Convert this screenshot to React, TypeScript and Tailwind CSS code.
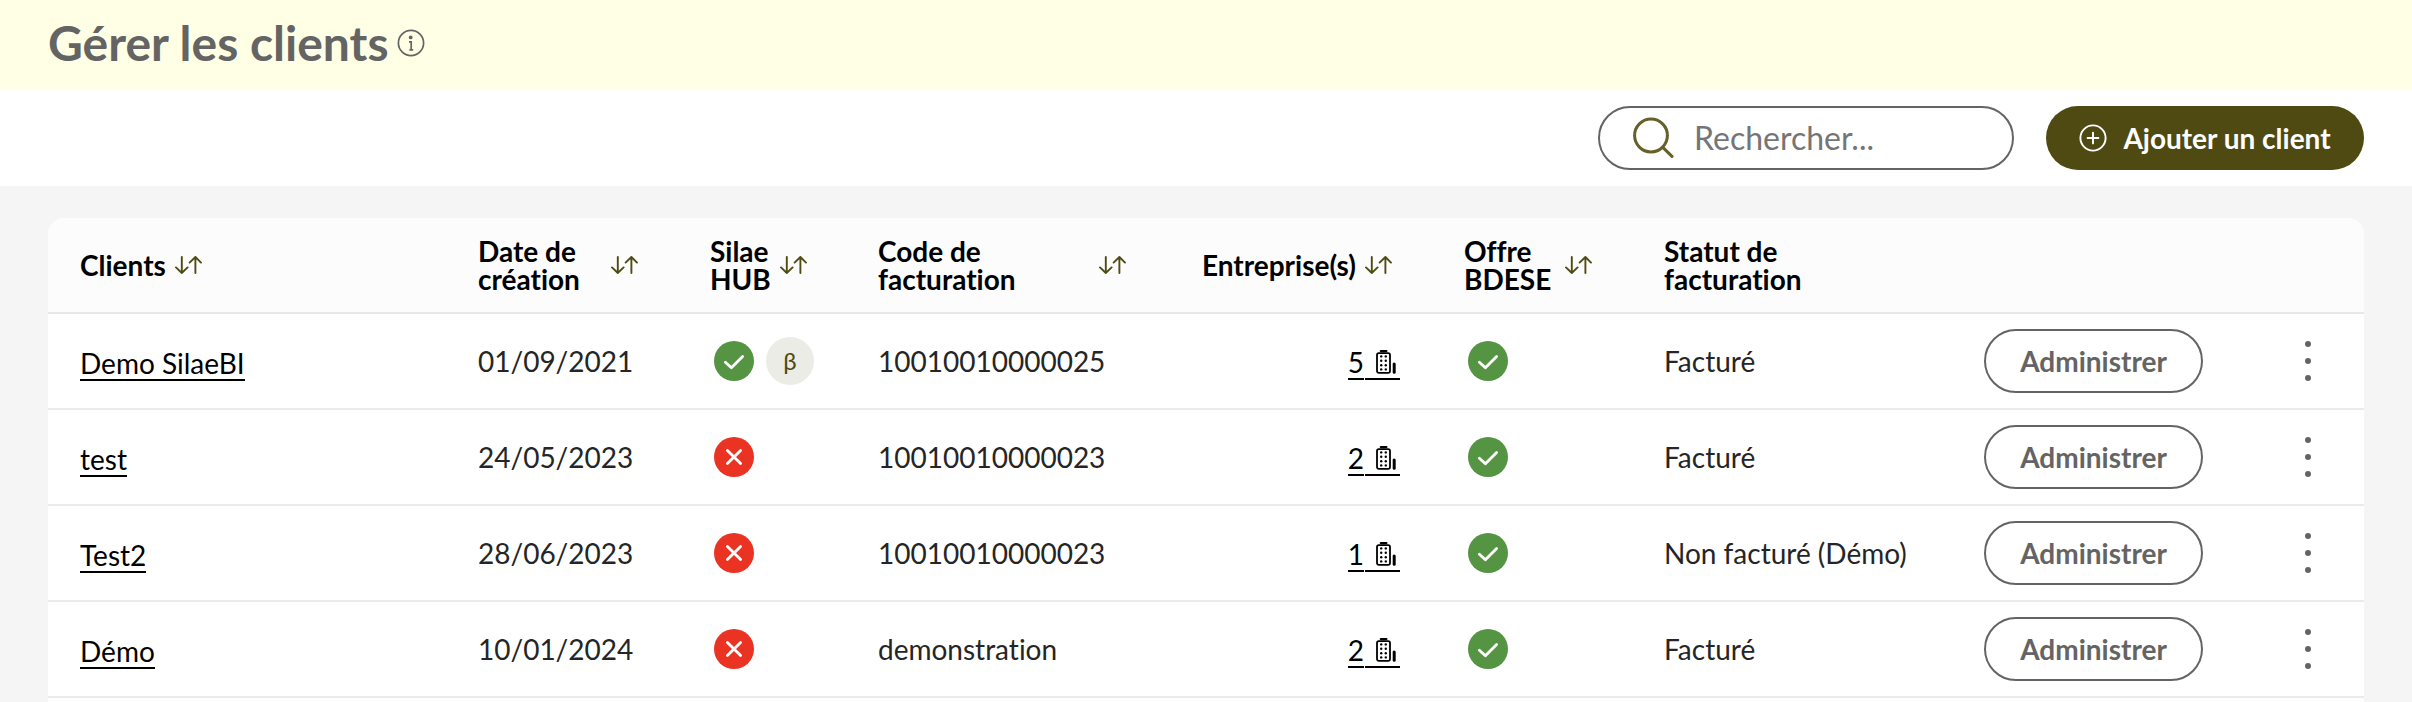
import { ReactNode } from 'react';

type Client = {
  name: string;
  createdAt: string;
  hub: boolean;
  beta?: boolean;
  code: string;
  companies: number;
  bdese: boolean;
  status: string;
};

const clients: Client[] = [
  { name: 'Demo SilaeBI', createdAt: '01/09/2021', hub: true, beta: true, code: '10010010000025', companies: 5, bdese: true, status: 'Facturé' },
  { name: 'test', createdAt: '24/05/2023', hub: false, code: '10010010000023', companies: 2, bdese: true, status: 'Facturé' },
  { name: 'Test2', createdAt: '28/06/2023', hub: false, code: '10010010000023', companies: 1, bdese: true, status: 'Non facturé (Démo)' },
  { name: 'Démo', createdAt: '10/01/2024', hub: false, code: 'demonstration', companies: 2, bdese: true, status: 'Facturé' },
];

function InfoIcon() {
  return (
    <svg className="w-7 h-7" viewBox="0 0 28 28" fill="none" stroke="#646464" strokeWidth="1.7">
      <circle cx="14" cy="14" r="12.6" />
      <circle cx="13.7" cy="8.4" r="1.9" fill="#646464" stroke="none" />
      <path d="M12 12.8h2.2v8M12.4 20.8h3.8" />
    </svg>
  );
}

function SearchIcon() {
  return (
    <svg className="w-[42px] h-[42px] shrink-0" viewBox="0 0 42 42" fill="none" stroke="#656129" strokeWidth="3" strokeLinecap="round">
      <circle cx="19" cy="18.5" r="16.4" />
      <path d="M30.8 30.4 40 39.4" />
    </svg>
  );
}

function PlusCircleIcon() {
  return (
    <svg className="w-7 h-7 shrink-0" viewBox="0 0 28 28" fill="none" stroke="white" strokeWidth="1.9" strokeLinecap="round">
      <circle cx="14" cy="14" r="12.6" />
      <path d="M14 8.6v10.8M8.6 14h10.8" />
    </svg>
  );
}

function SortIcon() {
  return (
    <svg className="w-7 h-[18px] shrink-0" viewBox="0 0 28 18" fill="none" stroke="#4f4b12" strokeWidth="1.9" strokeLinecap="round" strokeLinejoin="round">
      <path d="M7.8 1v16M2 11.4l5.8 5.6 5.8-5.6" />
      <path d="M21.4 17V1M15.6 6.6l5.8-5.6 5.6 5.6" />
    </svg>
  );
}

function StatusIcon({ ok }: { ok: boolean }) {
  return (
    <svg className="w-10 h-10" viewBox="0 0 40 40" fill="none" stroke="white" strokeWidth="2.8" strokeLinecap="round" strokeLinejoin="round" role="img" aria-label={ok ? 'Oui' : 'Non'}>
      <circle cx="20" cy="20" r="20" fill={ok ? '#549443' : '#ea3323'} stroke="none" />
      {ok ? <path d="m11.4 21.2 6 5.6 11.2-11.4" /> : <path d="m13.4 13.4 13.2 13.2M26.6 13.4 13.4 26.6" />}
    </svg>
  );
}

function BuildingIcon() {
  return (
    <svg className="w-5 h-6" viewBox="0 0 20 24" fill="none" stroke="black" strokeWidth="1.8" strokeLinecap="round">
      <path d="M4.8 1.1h5.6" strokeWidth="2.2" />
      <rect x="1" y="3.2" width="13" height="19.6" rx="1.8" />
      <path d="M18.2 14v8.2" strokeWidth="3" />
      <g fill="black" stroke="none">
        {[6.4, 10.8, 15.2, 19.4].map((y) => (
          <g key={y}>
            <circle cx="5.2" cy={y} r="1.2" />
            <circle cx="9.8" cy={y} r="1.2" />
          </g>
        ))}
      </g>
    </svg>
  );
}

type HeaderCellProps = {
  children: ReactNode;
  sortable?: boolean;
  align?: string;
};

function HeaderCell({ children, sortable = true, align = 'justify-between' }: HeaderCellProps) {
  return (
    <th scope="col" className="pl-8 pr-10 text-left font-bold text-black leading-7">
      <div className={`flex items-center gap-2 ${align}`}>
        <span>{children}</span>
        {sortable && (
          <button type="button" aria-label="Trier">
            <SortIcon />
          </button>
        )}
      </div>
    </th>
  );
}

export default function App() {
  return (
    <div className="min-h-screen flex flex-col bg-[#f5f5f5] font-['Lato',sans-serif] text-[28px] text-[#252525] [font-variant-ligatures:none]">
      <header className="flex items-center gap-2 h-[90px] px-12 pb-1 bg-[#ffffe5]">
        <h1 className="text-5xl font-bold text-[#646464]">Gérer les clients</h1>
        <button type="button" aria-label="Informations">
          <InfoIcon />
        </button>
      </header>

      {/* Toolbar */}
      <div className="flex items-center justify-end gap-8 px-12 py-4 bg-white">
        <label className="flex items-center gap-5 w-[416px] h-16 pl-8 pr-6 border-2 border-[#646464] rounded-full">
          <SearchIcon />
          <input
            type="text"
            placeholder="Rechercher..."
            aria-label="Rechercher"
            className="min-w-0 flex-1 text-[32px] outline-none placeholder:text-[#757575]"
          />
        </label>
        <button type="button" className="flex items-center justify-center gap-4 w-[318px] h-16 rounded-full bg-[#4e4a12] text-white font-bold">
          <PlusCircleIcon />
          Ajouter un client
        </button>
      </div>

      <main className="flex-1 flex flex-col px-12 pt-8">
        <div className="flex-1 bg-white rounded-t-2xl overflow-hidden">
          <table className="w-full table-fixed">
            <colgroup>
              <col />
              <col className="w-[232px]" />
              <col className="w-[168px]" />
              <col className="w-[320px]" />
              <col className="w-[266px]" />
              <col className="w-[200px]" />
              <col className="w-[320px]" />
              <col className="w-[283px]" />
              <col className="w-[129px]" />
            </colgroup>
            <thead>
              <tr className="h-[95px] bg-[#fcfcfc] border-b-2 border-[#e8e8e8]">
                <HeaderCell align="justify-start">Clients</HeaderCell>
                <HeaderCell>Date de<br />création</HeaderCell>
                <HeaderCell>Silae<br />HUB</HeaderCell>
                <HeaderCell>Code de<br />facturation</HeaderCell>
                <HeaderCell align="justify-end">Entreprise(s)</HeaderCell>
                <HeaderCell>Offre<br />BDESE</HeaderCell>
                <HeaderCell sortable={false}>Statut de<br />facturation</HeaderCell>
                <td />
                <td />
              </tr>
            </thead>
            <tbody>
              {clients.map((client) => (
                <tr key={client.name} className="h-24 border-b-2 border-[#ebebeb]">
                  <td className="px-8 pt-1">
                    <a href="#" className="inline-block text-black leading-8 border-b-2 border-black">{client.name}</a>
                  </td>
                  <td className="pl-8">{client.createdAt}</td>
                  <td className="pl-9">
                    <div className="flex items-center gap-3">
                      <StatusIcon ok={client.hub} />
                      {client.beta && (
                        <span className="flex items-center justify-center w-12 h-12 rounded-full bg-[#ecece6] text-2xl text-[#4e4a12]">β</span>
                      )}
                    </div>
                  </td>
                  <td className="pl-8">{client.code}</td>
                  <td className="pr-8 pt-1">
                    <a href="#" className="flex justify-end gap-px text-black leading-8">
                      <span className="border-b-2 border-black">{client.companies}</span>
                      <span className="flex items-center pl-[11px] pr-1 border-b-2 border-black">
                        <BuildingIcon />
                      </span>
                    </a>
                  </td>
                  <td className="pl-9">
                    <StatusIcon ok={client.bdese} />
                  </td>
                  <td className="pl-8">{client.status}</td>
                  <td className="px-8">
                    <button type="button" className="w-full h-16 border-2 border-[#646464] rounded-full font-bold text-[#646464]">
                      Administrer
                    </button>
                  </td>
                  <td className="pr-8">
                    <button type="button" aria-label="Actions" className="ml-auto flex items-center justify-center w-12 h-12">
                      <svg className="w-[6px] h-10" viewBox="0 0 6 40" fill="#646464">
                        <circle cx="3" cy="3" r="3" />
                        <circle cx="3" cy="20" r="3" />
                        <circle cx="3" cy="37" r="3" />
                      </svg>
                    </button>
                  </td>
                </tr>
              ))}
            </tbody>
          </table>
        </div>
      </main>
    </div>
  );
}
